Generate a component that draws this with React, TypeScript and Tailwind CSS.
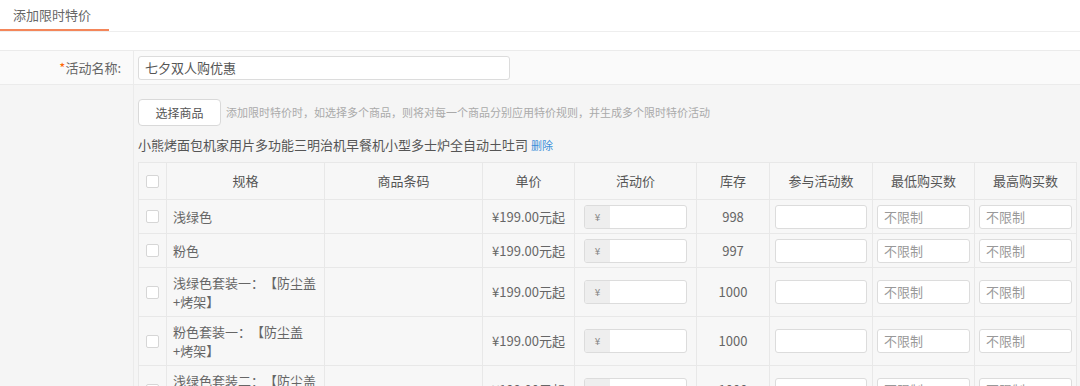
import React from 'react';

const rows = [
  { spec: '浅绿色', stock: '998' },
  { spec: '粉色', stock: '997' },
  { spec: '浅绿色套装一：【防尘盖+烤架】', stock: '1000' },
  { spec: '粉色套装一：【防尘盖+烤架】', stock: '1000' },
  { spec: '浅绿色套装二：【防尘盖+烤架】', stock: '1000' },
];

const cols = [28, 158, 158, 92, 122, 73, 103, 102, 102];
const heads = ['规格', '商品条码', '单价', '活动价', '库存', '参与活动数', '最低购买数', '最高购买数'];

const Checkbox = () => (
  <span className="mx-auto block w-[13px] h-[13px] rounded-[2px] border border-[#d6d6d6] bg-white" />
);

const TextBox = ({ placeholder }: { placeholder?: string }) => (
  <div className="h-[24px] w-full rounded-[3px] border border-[#dcdcdc] bg-white px-[6px] text-[13px] leading-[22px] text-[#999]">
    {placeholder}
  </div>
);

export default function App() {
  return (
    <div
      className="w-[1080px] h-[386px] overflow-hidden bg-white text-[#666] [text-spacing-trim:space-all]"
      style={{ fontFamily: '"Noto Sans CJK SC", "Noto Sans", sans-serif' }}
    >
      {/* Tabs */}
      <div className="h-[32px] border-b border-[#eeeeee] flex">
        <div className="w-[109px] h-[31px] border-b-2 border-[#f4865a] pl-[13px] text-[13px] leading-[29px] text-[#666]">
          添加限时特价
        </div>
      </div>

      <div className="h-[18px]" />

      {/* Form */}
      <div className="border-t border-[#ebebeb]">
        <div className="flex h-[34px] bg-[#fafafa] border-b border-[#ebebeb]">
          <div className="w-[134px] shrink-0 border-r border-[#ebebeb] pr-[12px] text-right text-[13px] leading-[33px]">
            <span className="text-[#f60]">*</span>活动名称:
          </div>
          <div className="pl-[4px] pt-[5px]">
            <div className="w-[372px] h-[24px] rounded-[3px] border border-[#dcdcdc] bg-white px-[6px] text-[13px] leading-[22px] text-[#555]">
              七夕双人购优惠
            </div>
          </div>
        </div>

        <div className="flex bg-[#f5f5f5]">
          <div className="w-[134px] shrink-0 border-r border-[#ebebeb]" />
          <div className="pl-[4px] pt-[14px] flex-1">
            <div className="flex items-center gap-[5px]">
              <button className="w-[83px] h-[27px] rounded-[4px] border border-[#d9d9d9] bg-white text-[12px] text-[#555]">
                选择商品
              </button>
              <span className="text-[11px] text-[#aaa]">
                添加限时特价时，如选择多个商品，则将对每一个商品分别应用特价规则，并生成多个限时特价活动
              </span>
            </div>
            <div className="mt-[11px] h-[16px] text-[13px] leading-[16px] text-[#555] whitespace-nowrap">
              小熊烤面包机家用片多功能三明治机早餐机小型多士炉全自动土吐司{' '}
              <span className="text-[11px] text-[#3b8fd9]">删除</span>
            </div>

            <table className="mt-[9px] table-fixed border-collapse bg-[#f7f7f7] text-[13px]">
              <colgroup>
                {cols.map((w, i) => (
                  <col key={i} style={{ width: w }} />
                ))}
              </colgroup>
              <thead>
                <tr className="h-[37px]">
                  <th className="border border-[#e8e8e8]">
                    <Checkbox />
                  </th>
                  {heads.map((h) => (
                    <th key={h} className="border border-[#e8e8e8] font-normal text-[#555]">
                      {h}
                    </th>
                  ))}
                </tr>
              </thead>
              <tbody>
                {rows.map((r, i) => (
                  <tr key={i} className={i < 2 ? 'h-[34px]' : 'h-[48px]'}>
                    <td className="border border-[#e8e8e8]">
                      <Checkbox />
                    </td>
                    <td className="border border-[#e8e8e8] px-[6px] py-[5px] leading-[19px]">{r.spec}</td>
                    <td className="border border-[#e8e8e8]" />
                    <td className="border border-[#e8e8e8] text-center">¥199.00元起</td>
                    <td className="border border-[#e8e8e8] px-[9px]">
                      <div className="flex h-[24px] w-full rounded-[3px] border border-[#dcdcdc] bg-white overflow-hidden">
                        <span className="w-[25px] bg-[#eeeeee] text-center text-[10px] leading-[22px] text-[#888]">¥</span>
                        <span className="flex-1" />
                      </div>
                    </td>
                    <td className="border border-[#e8e8e8] text-center">{r.stock}</td>
                    <td className="border border-[#e8e8e8] px-[5px]">
                      <TextBox />
                    </td>
                    <td className="border border-[#e8e8e8] px-[4px]">
                      <TextBox placeholder="不限制" />
                    </td>
                    <td className="border border-[#e8e8e8] px-[4px]">
                      <TextBox placeholder="不限制" />
                    </td>
                  </tr>
                ))}
              </tbody>
            </table>
          </div>
        </div>
      </div>
    </div>
  );
}
